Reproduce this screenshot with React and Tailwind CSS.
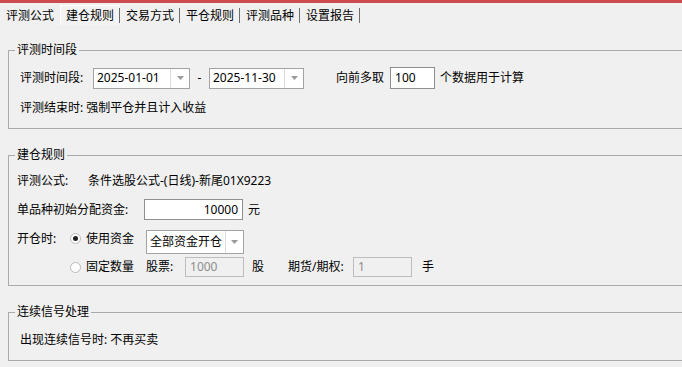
const tabs = ["评测公式", "建仓规则", "交易方式", "平仓规则", "评测品种", "设置报告"];

function Caret() {
  return (
    <svg width="7" height="4" viewBox="0 0 7 4">
      <path d="M0 0h7L3.5 4z" fill="#9a9a9a" />
    </svg>
  );
}

function DropBox({ value, width, dropWidth = "w-[19px]", height = "h-[21px]", pad = "pl-[3px]" }) {
  return (
    <div className={`flex ${height} ${width} border border-[#a3a3a3] bg-white`}>
      <div className={`flex-1 ${pad} flex items-center overflow-hidden whitespace-nowrap`}>{value}</div>
      <div className={`${dropWidth} border-l border-[#dcdcdc] flex items-center justify-center`}>
        <Caret />
      </div>
    </div>
  );
}

function Radio({ checked }) {
  return (
    <span className="w-[11px] h-[11px] rounded-full border border-[#b9b9b9] bg-white flex items-center justify-center">
      {checked && <span className="w-[5px] h-[5px] rounded-full bg-[#222]" />}
    </span>
  );
}

function Group({ title, className, children }) {
  return (
    <fieldset className={`ml-2 -mr-4 border border-[#ababab] ${className}`}>
      <legend className="ml-[6px] px-[2px] leading-4">{title}</legend>
      {children}
    </fieldset>
  );
}

export default function App() {
  return (
    <div className="w-[682px] h-[367px] overflow-hidden bg-[#f0f0f0] text-[12px] text-black font-['Noto_Sans','Noto_Sans_CJK_SC',sans-serif]">
      <div className="h-[3px] bg-[#cd4a4f]" />

      {/* tabs */}
      <div className="flex h-[22px]">
        {tabs.map((t, i) => (
          <div
            key={t}
            className={`w-[60px] flex items-end ${
              i === 1 ? "mt-[2px] border-l border-t border-white bg-[#f3f3f3]" : ""
            }`}
          >
            <span className={`flex-1 leading-4 mb-[1px] ${i === 1 ? "pl-[5px]" : "pl-[6px]"}`}>{t}</span>
            {i > 0 && <span className="w-px h-[15px] mb-[2px] bg-[#6e6e6e]" />}
          </div>
        ))}
      </div>

      <Group title="评测时间段" className="mt-[17px] pb-[12px]">
        <div className="pl-[11px] pt-[9px] flex items-center h-[31px] box-border">
          <span className="w-[73px]">评测时间段:</span>
          <DropBox value="2025-01-01" width="w-[97px]" />
          <span className="w-[19px] text-center">-</span>
          <DropBox value="2025-11-30" width="w-[95px]" />
          <span className="ml-[32px]">向前多取</span>
          <div className="ml-[6px] w-[45px] h-[22px] border border-[#8f8f8f] bg-white pl-[4px] flex items-center">100</div>
          <span className="ml-[5px]">个数据用于计算</span>
        </div>
        <div className="pl-[11px] mt-[11px] leading-4">评测结束时: 强制平仓并且计入收益</div>
      </Group>

      <Group title="建仓规则" className="mt-[18px] pb-[8px]">
        <div className="pl-[8px] pt-[10px] flex leading-4">
          <span className="w-[71px]">评测公式:</span>
          <span>条件选股公式-(日线)-新尾01X9223</span>
        </div>
        <div className="pl-[8px] mt-[10px] flex items-center">
          <span className="w-[127px]">单品种初始分配资金:</span>
          <div className="w-[99px] h-[21px] border border-[#8f8f8f] bg-white pr-[4px] flex items-center justify-end">10000</div>
          <span className="ml-[5px]">元</span>
        </div>
        <div className="pl-[8px] mt-[10px] flex items-start">
          <span className="w-[53px] mt-[1px] leading-4">开仓时:</span>
          <span className="mt-[3px]">
            <Radio checked />
          </span>
          <span className="ml-[5px] mt-[1px] leading-4">使用资金</span>
          <div className="ml-[12px]">
            <DropBox value="全部资金开仓" width="w-[98px]" height="h-[24px]" dropWidth="w-[18px]" />
          </div>
        </div>
        <div className="pl-[61px] mt-[3px] flex items-center">
          <Radio />
          <span className="ml-[5px]">固定数量</span>
          <span className="ml-[12px] w-[39px]">股票:</span>
          <div className="w-[59px] h-[20px] border border-[#bdbdbd] pl-[4px] flex items-center text-[#8d8d8d]">1000</div>
          <span className="ml-[8px] w-[36px]">股</span>
          <span className="w-[65px]">期货/期权:</span>
          <div className="w-[59px] h-[20px] border border-[#bdbdbd] pl-[4px] flex items-center text-[#8d8d8d]">1</div>
          <span className="ml-[10px]">手</span>
        </div>
      </Group>

      <Group title="连续信号处理" className="mt-[18px] pb-[12px]">
        <div className="pl-[11px] pt-[12px] leading-4">出现连续信号时: 不再买卖</div>
      </Group>
    </div>
  );
}
